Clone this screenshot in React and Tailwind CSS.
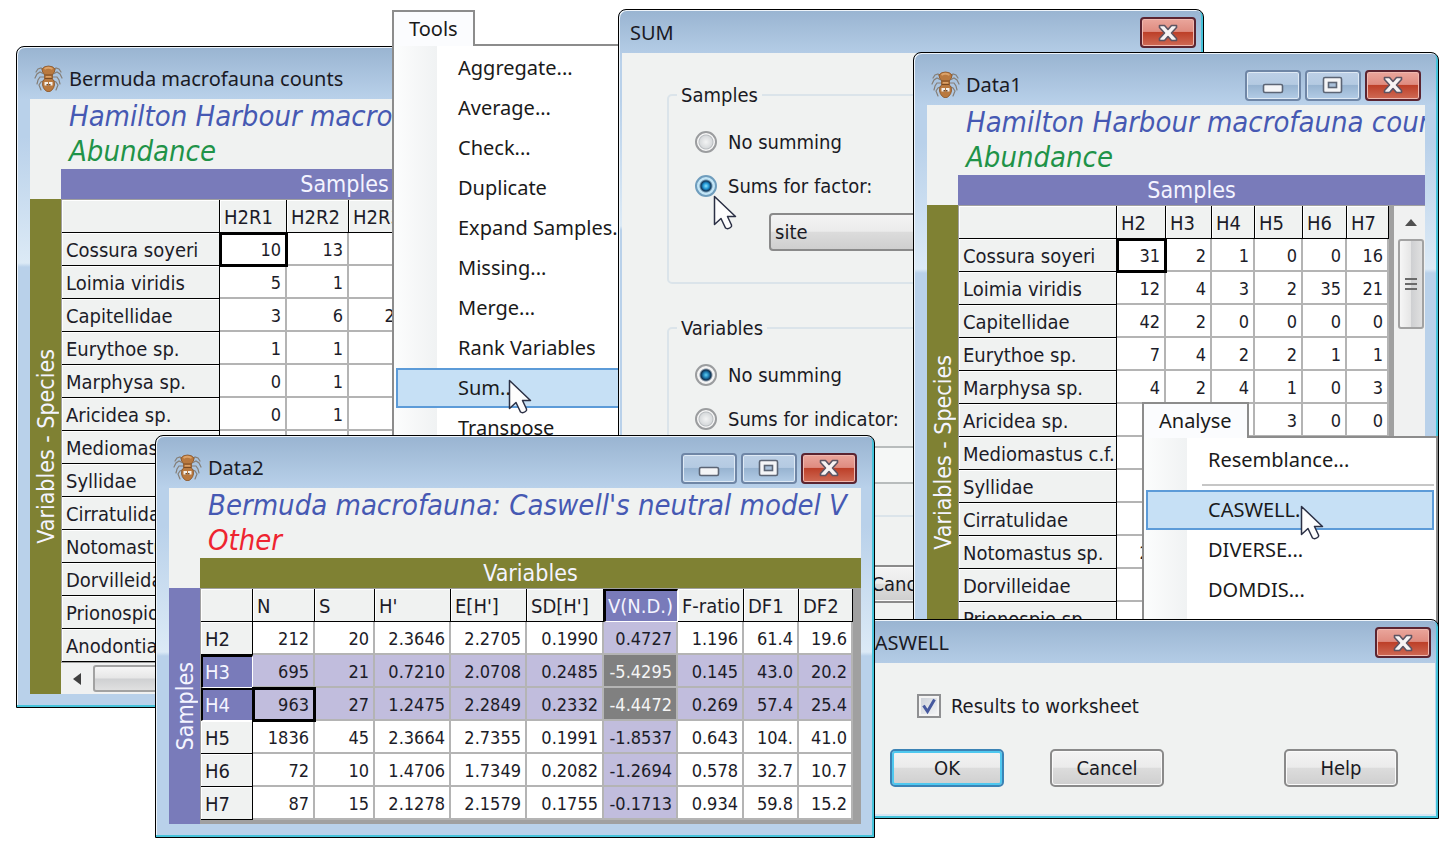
import React, { useState } from "react";
import clsx from "clsx";

const species = [
  "Cossura soyeri",
  "Loimia viridis",
  "Capitellidae",
  "Eurythoe sp.",
  "Marphysa sp.",
  "Aricidea sp.",
  "Mediomastus c.f.",
  "Syllidae",
  "Cirratulidae",
  "Notomastus sp.",
  "Dorvilleidae",
  "Prionospio sp.",
  "Anodontia",
];

const bermudaValues = [
  ["10", "13"],
  ["5", "1"],
  ["3", "6", "27"],
  ["1", "1"],
  ["0", "1"],
  ["0", "1"],
];

const siteValues = [
  ["31", "2", "1", "0", "0", "16"],
  ["12", "4", "3", "2", "35", "21"],
  ["42", "2", "0", "0", "0", "0"],
  ["7", "4", "2", "2", "1", "1"],
  ["4", "2", "4", "1", "0", "3"],
  ["", "", "", "3", "0", "0"],
  [],
  [],
  [],
  ["21"],
];

const bermudaRows = species.map((label, i) => ({ label, values: bermudaValues[i] || [] }));
const siteRows = species.slice(0, 12).map((label, i) => ({ label, values: siteValues[i] || [] }));

const caswellRows = [
  { label: "H2", values: ["212", "20", "2.3646", "2.2705", "0.1990", "0.4727", "1.196", "61.4", "19.6"] },
  { label: "H3", values: ["695", "21", "0.7210", "2.0708", "0.2485", "-5.4295", "0.145", "43.0", "20.2"] },
  { label: "H4", values: ["963", "27", "1.2475", "2.2849", "0.2332", "-4.4472", "0.269", "57.4", "25.4"] },
  { label: "H5", values: ["1836", "45", "2.3664", "2.7355", "0.1991", "-1.8537", "0.643", "104.", "41.0"] },
  { label: "H6", values: ["72", "10", "1.4706", "1.7349", "0.2082", "-1.2694", "0.578", "32.7", "10.7"] },
  { label: "H7", values: ["87", "15", "2.1278", "2.1579", "0.1755", "-0.1713", "0.934", "59.8", "15.2"] },
];

const tahoma = "font-['DejaVu_Sans_Condensed','DejaVu_Sans',sans-serif]";
const segoe = "font-['Noto_Sans','Open_Sans',sans-serif]";

function SpiderIcon() {
  return (
    <svg width="29" height="28" viewBox="0 0 29 28" className="shrink-0" aria-hidden="true">
      <g fill="none" stroke="#857f78" strokeWidth="1.2" strokeLinecap="round">
        <path d="M10 6 7 3 4 4 2 7" />
        <path d="M10 9 6 7 3 9 1 13" />
        <path d="M10 12 6 12 4 15 3 19" />
        <path d="M9 16 7 17 5 20 7 25" />
        <path d="M19 6 22 3 25 4 27 7" />
        <path d="M19 9 23 7 26 9 28 13" />
        <path d="M19 12 23 12 25 15 26 19" />
        <path d="M20 16 22 17 24 20 22 25" />
      </g>
      <path d="M8 4Q10 1 14.500 1Q19 1 21 4Q21 8 18.500 9V14Q21 16 20.500 20Q20 23 18 25L16 26.500H13L11 25Q9 23 8.500 20Q8 16 10.500 14V9Q8 8 8 4Z" fill="#b9793f" stroke="#8a5426" strokeWidth="0.800" />
      <path d="M10.500 4Q14 1.500 18.500 4" stroke="#dba269" strokeWidth="1.800" fill="none" />
      <path d="M11 10h7M11 13.500h7" stroke="#7a4a22" strokeWidth="1" />
      <path d="M12 11.800h5" stroke="#dba269" strokeWidth="1.500" />
      <path d="M10.500 17h3.500v3.500h-3.500zM15 17h3.500v3.500H15z" fill="#f4efe8" />
      <path d="M12.500 19h1.500v1.500h-1.500zM15 19h1.500v1.500H15z" fill="#6b4a30" />
    </svg>
  );
}

function Cursor({ className }) {
  return (
    <svg width="24" height="36" viewBox="0 0 24 36" className={clsx("absolute pointer-events-none", className)} aria-hidden="true">
      <path
        d="M1.500 1.500V29.500L8 23.500 12.500 33Q14.500 34.500 17.500 32.500Q19 31.500 18.500 30L14.500 21.500H22.500Z"
        fill="#fdfdfd"
        stroke="#2b3045"
        strokeWidth="1.500"
        strokeLinejoin="round"
      />
    </svg>
  );
}

const frameButton =
  "flex h-[31px] w-14 items-center justify-center rounded-[4px] border-2 border-[#6f86a6] bg-[linear-gradient(#bdd0e6_0%,#b4cae2_46%,#98b4d1_50%,#b3cce6_100%)] shadow-[inset_0_0_0_1px_#dfeaf5]";

function CloseButton() {
  return (
    <button
      type="button"
      aria-label="Close"
      className="flex h-[31px] w-14 items-center justify-center rounded-[4px] border-2 border-[#5b2430] bg-[linear-gradient(#eaa69c_0%,#df8c80_46%,#bd4029_50%,#cf6a55_100%)] shadow-[inset_0_0_0_1px_#f0b9b0]"
    >
      <svg width="22" height="18" viewBox="0 0 22 18" aria-hidden="true">
        <path
          d="M2.500 1.500H7.500L11 5.500 14.500 1.500H19.500V3.500L14.500 9 19.500 14.500V16.500H14.500L11 12.500 7.500 16.500H2.500V14.500L7.500 9 2.500 3.500Z"
          fill="#f7f3f3"
          stroke="#5d5462"
          strokeWidth="1.600"
          strokeLinejoin="round"
        />
      </svg>
    </button>
  );
}

function WindowButtons() {
  return (
    <div className="ml-auto flex gap-1 pr-1">
      <button type="button" aria-label="Minimize" className={frameButton}>
        <svg width="22" height="18" viewBox="0 0 22 18" aria-hidden="true">
          <rect x="1.500" y="8.500" width="19" height="8" rx="1.500" fill="#f4f5f7" stroke="#5c6575" strokeWidth="1.600" />
        </svg>
      </button>
      <button type="button" aria-label="Maximize" className={frameButton}>
        <svg width="22" height="18" viewBox="0 0 22 18" aria-hidden="true">
          <rect x="1.500" y="1.500" width="18" height="15" rx="1.500" fill="#f4f5f7" stroke="#5c6575" strokeWidth="1.600" />
          <rect x="6.500" y="6.500" width="8" height="5" fill="#a9c0da" stroke="#5c6575" strokeWidth="1.600" />
        </svg>
      </button>
      <CloseButton />
    </div>
  );
}

const frame =
  "absolute flex flex-col overflow-hidden rounded-t-lg border border-black bg-[linear-gradient(#99b4d1_0px,#b9d1ea_52px,#b9d1ea_90px,#dceaf6_216px,#b9d1ea_220px)]";

function DataWindow({ title, heading, kind, kindClass, band, bandClass, side, sideClass, className, children, scrollX }) {
  return (
    <section className={clsx(frame, tahoma, "px-[13px] pb-[13px] shadow-[inset_-2px_-2px_0_#45c3da,inset_1px_1px_0_#eef4fa]", className)}>
      <header className="flex h-[52px] shrink-0 items-center gap-1.5 pt-3 pl-1">
        <SpiderIcon />
        <span className={clsx(segoe, "text-[20px] whitespace-nowrap text-[#1a1a24]")}>{title}</span>
        <WindowButtons />
      </header>
      <div className="flex min-h-0 flex-1 flex-col overflow-hidden bg-[#f0f2f1]">
        <div className="h-[70px] shrink-0 pl-[39px] text-[29px] leading-[35px] whitespace-nowrap italic">
          <h2 className="text-[#4659b3]">{heading}</h2>
          <p className={kindClass}>{kind}</p>
        </div>
        <div className={clsx("ml-[31px] h-[30px] shrink-0 text-center text-[23px] leading-[30px] text-[#f4f4ff]", bandClass)}>{band}</div>
        <div className="flex min-h-0 flex-1">
          <div className={clsx("flex w-[31px] shrink-0 items-center justify-center text-[#f4f4ff]", sideClass)}>
            <span className="rotate-180 text-[23px] leading-[30px] whitespace-nowrap [writing-mode:vertical-rl]">{side}</span>
          </div>
          <div className="flex min-w-0 flex-1 flex-col overflow-hidden">
            <div className="flex min-h-0 flex-1 overflow-hidden border-t border-l border-[#a0a0a0] bg-[#a0a0a0]">{children}</div>
            {scrollX}
          </div>
        </div>
      </div>
    </section>
  );
}

const headCell = "overflow-hidden border-r border-b border-black bg-[#f0f2f1] pt-0.5 pl-1 text-left font-normal shadow-[inset_1px_1px_0_#fff]";
const headSelected = "overflow-hidden border-t-2 border-l-2 border-r border-b border-t-black border-l-black border-r-white border-b-white bg-[#797bba] pl-0.5 text-left font-normal text-[#f4f4ff]";

function Sheet({ columns, rows, current, selectedRows = [], selectedColumn = -1 }) {
  const total = columns.reduce((sum, c) => sum + c.width, 0);
  return (
    <table className="shrink-0 table-fixed border-separate border-spacing-0 self-start text-[20px] leading-6 whitespace-nowrap text-[#1c1c28]" style={{ width: total }}>
      <colgroup>
        {columns.map((c, i) => (
          <col key={i} style={{ width: c.width }} />
        ))}
      </colgroup>
      <thead>
        <tr className="h-[33px]">
          {columns.map((c, i) => (
            <th key={i} scope="col" className={i - 1 === selectedColumn && i > 0 ? headSelected : headCell}>
              {c.name}
            </th>
          ))}
        </tr>
      </thead>
      <tbody>
        {rows.map((row, r) => {
          const rowSelected = selectedRows.includes(r);
          return (
            <tr key={row.label} className="h-[33px]">
              <th scope="row" className={rowSelected ? headSelected : headCell}>{row.label}</th>
              {columns.slice(1).map((c, i) => {
                const colSelected = i === selectedColumn;
                return (
                  <td
                    key={i}
                    className={clsx(
                      "border-r-2 border-b-2 border-[#b4b4b4] pt-0.5 pr-1 text-right text-[18px]",
                      rowSelected && colSelected && "bg-[#808080] text-[#f4f4f4]",
                      rowSelected !== colSelected && "bg-[#c1bddd]",
                      !rowSelected && !colSelected && "bg-white",
                      current[0] === r && current[1] === i && "relative outline-3 -outline-offset-2 outline-black"
                    )}
                  >
                    {row.values[i]}
                  </td>
                );
              })}
            </tr>
          );
        })}
      </tbody>
    </table>
  );
}

function Menu({ name, items, active, className, cursor }) {
  return (
    <nav className={clsx("absolute flex flex-col items-start text-[20px] text-[#1a1a1a]", segoe, className)}>
      <button type="button" className="relative z-10 -mb-0.5 h-9 border-2 border-b-0 border-[#8c8c8c] bg-[#fbfcfe] px-[15px]">
        {name}
      </button>
      <ul className="w-full flex-1 border-2 border-[#8c8c8c] bg-[linear-gradient(90deg,#fcfdfd_0px,#f0f2f3_43px,#ffffff_43px)] p-0.5">
        {items.map((item, i) =>
          item === "-" ? (
            <li key={i} className="flex h-[10px] items-center pl-[56px]">
              <hr className="w-full border-t-2 border-[#c6c6c6]" />
            </li>
          ) : (
            <li key={item}>
              <button
                type="button"
                className={clsx(
                  "block h-10 w-full border-2 pl-[60px] text-left whitespace-nowrap",
                  item === active ? "border-[#5c9bd8] bg-[#c6e0f5]" : "border-transparent"
                )}
              >
                {item}
              </button>
            </li>
          )
        )}
      </ul>
      {cursor}
    </nav>
  );
}

function Radio({ name, label, hot, checked, onChange }) {
  return (
    <label className="flex h-[22px] items-center gap-[11px]">
      <input
        type="radio"
        name={name}
        checked={checked}
        onChange={onChange}
        className={clsx(
          "size-[22px] appearance-none rounded-full border-2",
          hot ? "border-[#6f9dbd]" : "border-[#9b9d9f]",
          !checked && "bg-[radial-gradient(circle,#f3f4f4_0px,#d8dbdd_6px,#b9bdc0_7px,#f8f8f8_8px)]",
          checked && !hot && "bg-[radial-gradient(circle_at_9px_9px,#5fd0f5_0px,#1e78ad_3px,#10304f_5px,#f4f4f4_7px)]",
          checked && hot && "bg-[radial-gradient(circle_at_9px_9px,#8be4ff_0px,#1f93d2_3px,#12395d_5px,#c3e5f6_7px)]"
        )}
      />
      {label}
    </label>
  );
}

const pushButton = "h-[38px] w-[114px] rounded-[5px] border-2 bg-[linear-gradient(#f3f3f3_0%,#ebebeb_48%,#dcdcdc_50%,#cfcfcf_100%)]";
const plainButton = "border-[#8a8a8a] shadow-[inset_0_0_0_1px_#fafafa]";

function Dialog({ title, className, children }) {
  return (
    <section className={clsx(frame, "px-[3px] pb-1 text-[20px] text-[#1a1a24] shadow-[inset_-2px_-2px_0_#45c3da,inset_1px_1px_0_#eef4fa]", className)}>
      <header className={clsx("flex h-[43px] shrink-0 items-center justify-between pt-0.5 pr-1 pl-2", segoe)}>
        {title}
        <CloseButton />
      </header>
      <div className={clsx("flex-1 bg-[#f0f2f1]", tahoma)}>{children}</div>
    </section>
  );
}

function FactorGroup({ legend, option, value, onChange, hot, site }) {
  return (
    <fieldset className="h-[201px] rounded-[5px] border-2 border-[#dbe4ea] pl-[26px]">
      <legend className="-ml-[18px] px-1 leading-6">{legend}</legend>
      <div className="flex flex-col gap-[22px] pt-6">
        <Radio name={legend} label="No summing" checked={value === "none"} onChange={() => onChange("none")} />
        <Radio name={legend} label={option} hot={hot} checked={value === "sum"} onChange={() => onChange("sum")} />
      </div>
      <select
        aria-label={option}
        disabled={!site}
        className={clsx(
          "mt-4 ml-[74px] h-[38px] w-80 appearance-none rounded-[4px] border-2 pl-1",
          site ? "border-[#8a8a8a] bg-[linear-gradient(#f3f3f3_0%,#ebebeb_48%,#dcdcdc_50%,#cfcfcf_100%)]" : "border-[#b8bcbc] bg-[#f5f7f6]"
        )}
      >
        <option>{site}</option>
      </select>
    </fieldset>
  );
}

function VerticalScroll() {
  return (
    <div className="ml-[5px] flex flex-1 flex-col items-center bg-[#f0f1f1] pl-0.5">
      <div className="flex h-[33px] items-center">
        <svg width="12" height="8" viewBox="0 0 12 8" aria-hidden="true">
          <path d="M0 7 6 0 12 7Z" fill="#505050" />
        </svg>
      </div>
      <div className="flex h-[90px] w-[26px] flex-col items-center justify-center gap-[3px] rounded-[3px] border-2 border-[#a2a2a2] bg-[linear-gradient(90deg,#f6f6f6_0%,#e6e6e6_48%,#cfd0d2_52%,#e0e0e0_100%)]">
        <span className="h-0.5 w-3 bg-[#6a6a6a]" />
        <span className="h-0.5 w-3 bg-[#6a6a6a]" />
        <span className="h-0.5 w-3 bg-[#6a6a6a]" />
      </div>
    </div>
  );
}

function HorizontalScroll() {
  return (
    <div className="flex h-[31px] shrink-0 items-center bg-[#f0f1f1]">
      <div className="flex w-8 justify-center">
        <svg width="8" height="12" viewBox="0 0 8 12" aria-hidden="true">
          <path d="M8 0 0 6 8 12Z" fill="#404040" />
        </svg>
      </div>
      <div className="h-[27px] w-72 rounded-[3px] border-2 border-[#a2a2a2] bg-[linear-gradient(#f6f6f6_0%,#e6e6e6_48%,#cfd0d2_52%,#e0e0e0_100%)]" />
    </div>
  );
}

const bermudaColumns = [
  { name: "", width: 158 },
  { name: "H2R1", width: 67 },
  { name: "H2R2", width: 62 },
  { name: "H2R3", width: 62 },
  { name: "", width: 62 },
  { name: "", width: 62 },
  { name: "", width: 62 },
];

const siteColumns = [
  { name: "", width: 158 },
  { name: "H2", width: 49 },
  { name: "H3", width: 46 },
  { name: "H4", width: 43 },
  { name: "H5", width: 48 },
  { name: "H6", width: 44 },
  { name: "H7", width: 42 },
];

const caswellColumns = [
  { name: "", width: 52 },
  { name: "N", width: 62 },
  { name: "S", width: 60 },
  { name: "H'", width: 76 },
  { name: "E[H']", width: 76 },
  { name: "SD[H']", width: 77 },
  { name: "V(N.D.)", width: 74 },
  { name: "F-ratio", width: 66 },
  { name: "DF1", width: 55 },
  { name: "DF2", width: 54 },
];

export default function App() {
  const [sampleSum, setSampleSum] = useState("sum");
  const [variableSum, setVariableSum] = useState("none");
  const [toSheet, setToSheet] = useState(true);

  return (
    <main className="relative min-h-screen w-full overflow-hidden bg-white">
      <DataWindow
        title="Bermuda macrofauna counts"
        heading="Hamilton Harbour macrofauna counts"
        kind="Abundance"
        kindClass="text-[#1f9348]"
        band="Samples"
        bandClass="bg-[#797bba]"
        side="Variables - Species"
        sideClass="bg-[#7f8133]"
        className="top-[46px] left-[16px] h-[662px] w-[626px]"
        scrollX={<HorizontalScroll />}
      >
        <Sheet columns={bermudaColumns} rows={bermudaRows} current={[0, 0]} />
      </DataWindow>

      <Menu
        name="Tools"
        active="Sum..."
        className="top-[10px] left-[392px] h-[480px] w-[280px]"
        items={["Aggregate...", "Average...", "Check...", "Duplicate", "Expand Samples...", "Missing...", "Merge...", "Rank Variables", "Sum...", "Transpose"]}
        cursor={<Cursor className="top-[369px] left-[116px]" />}
      />

      <Dialog title="SUM" className="top-[9px] left-[618px] h-[650px] w-[586px]">
        <div className="flex flex-col gap-8 pt-[30px] pl-[45px]">
          <FactorGroup legend="Samples" option="Sums for factor:" site="site" hot value={sampleSum} onChange={setSampleSum} />
          <FactorGroup legend="Variables" option="Sums for indicator:" value={variableSum} onChange={setVariableSum} />
          <button type="button" className={clsx(pushButton, plainButton, "mt-4 ml-[178px]")}>Cancel</button>
        </div>
        <Cursor className="top-[185px] left-[94px]" />
      </Dialog>

      <DataWindow
        title="Data1"
        heading="Hamilton Harbour macrofauna counts"
        kind="Abundance"
        kindClass="text-[#1f9348]"
        band="Samples"
        bandClass="bg-[#797bba]"
        side="Variables - Species"
        sideClass="bg-[#7f8133]"
        className="top-[52px] left-[913px] h-[662px] w-[526px]"
      >
        <Sheet columns={siteColumns} rows={siteRows} current={[0, 0]} />
        <VerticalScroll />
      </DataWindow>

      <Menu
        name="Analyse"
        active="CASWELL..."
        className="top-[402px] left-[1142px] h-[280px] w-[296px]"
        items={["Resemblance...", "-", "CASWELL...", "DIVERSE...", "DOMDIS..."]}
        cursor={<Cursor className="top-[103px] left-[158px]" />}
      />

      <Dialog title="CASWELL" className="top-[619px] left-[850px] h-[200px] w-[589px]">
        <label className="flex items-center gap-[10px] pt-[31px] pl-[63px] leading-6">
          <span className="relative flex size-6">
            <input
              type="checkbox"
              checked={toSheet}
              onChange={(e) => setToSheet(e.target.checked)}
              className="size-6 appearance-none border-2 border-[#8f9092] bg-[linear-gradient(135deg,#c9ced6,#f6f7f8)] shadow-[inset_0_0_0_2px_#f4f4f4]"
            />
            {toSheet && (
              <svg viewBox="0 0 24 24" className="pointer-events-none absolute inset-0" aria-hidden="true">
                <path d="M6.500 11.500 10.500 17.500 17.500 5.500" fill="none" stroke="#46599f" strokeWidth="3" />
              </svg>
            )}
          </span>
          Results to worksheet
        </label>
        <div className="flex gap-[46px] pt-[31px] pr-[37px] pl-9">
          <button type="button" className={clsx(pushButton, "border-[#3c83b5] shadow-[inset_0_0_0_2px_#4fc8ef]")}>OK</button>
          <button type="button" className={clsx(pushButton, plainButton)}>Cancel</button>
          <button type="button" className={clsx(pushButton, plainButton, "ml-auto")}>Help</button>
        </div>
      </Dialog>

      <DataWindow
        title="Data2"
        heading="Bermuda macrofauna: Caswell's neutral model V"
        kind="Other"
        kindClass="text-[#ee2430]"
        band="Variables"
        bandClass="bg-[#7f8133]"
        side="Samples"
        sideClass="bg-[#797bba]"
        className="top-[435px] left-[155px] h-[403px] w-[720px]"
      >
        <Sheet columns={caswellColumns} rows={caswellRows} current={[2, 0]} selectedRows={[1, 2]} selectedColumn={5} />
      </DataWindow>
    </main>
  );
}
